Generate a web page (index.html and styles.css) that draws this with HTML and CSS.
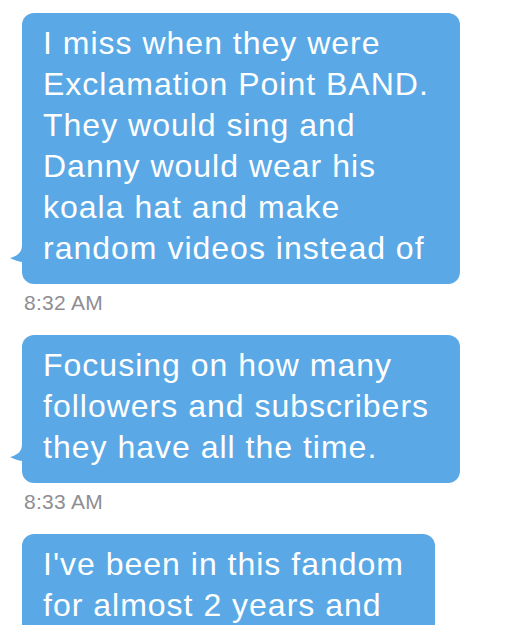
FILE: index.html
```html
<!DOCTYPE html>
<html lang="en">
<head>
    <meta charset="UTF-8">
    <meta name="viewport" content="width=device-width, initial-scale=1.0">
    <title>Messages</title>
    <link rel="stylesheet" href="styles.css">
</head>
<body>
    <div class="thread">
        <div class="message">
            <div class="bubble">
                I miss when they were<br>
                Exclamation Point BAND.<br>
                They would sing and<br>
                Danny would wear his<br>
                koala hat and make<br>
                random videos instead of
                <svg class="tail" viewBox="0 0 14 18" width="14" height="18"><path d="M12 0 C12 7 8 11 0 13 C4 15 9 17 14 17 L14 0 Z"/></svg>
            </div>
            <p class="time">8:32 AM</p>
        </div>

        <div class="message">
            <div class="bubble">
                Focusing on how many<br>
                followers and subscribers<br>
                they have all the time.
                <svg class="tail" viewBox="0 0 14 18" width="14" height="18"><path d="M12 0 C12 7 8 11 0 13 C4 15 9 17 14 17 L14 0 Z"/></svg>
            </div>
            <p class="time">8:33 AM</p>
        </div>

        <div class="message">
            <div class="bubble">
                I've been in this fandom<br>
                for almost 2 years and
            </div>
        </div>
    </div>
</body>
</html>
```
FILE: styles.css
```css
body {
    font-family: "Liberation Sans", Arial, sans-serif;
    background-color: #ffffff;
    margin: 0;
    padding: 13px 0 0 22px;
    overflow: hidden;
}

.thread {
    display: flex;
    flex-direction: column;
    align-items: flex-start;
    gap: 20px;
}

.message {
    display: flex;
    flex-direction: column;
    align-items: flex-start;
}

.bubble {
    position: relative;
    background-color: #5aa9e6;
    color: white;
    font-size: 32px;
    line-height: 41px;
    letter-spacing: 1px;
    padding: 10px 31px 15px 21px;
    border-radius: 12px;
    white-space: nowrap;
}

.tail {
    position: absolute;
    left: -12px;
    bottom: 21px;
    fill: #5aa9e6;
}

.time {
    margin: 6px 0 0 2px;
    font-size: 21px;
    line-height: 25px;
    letter-spacing: 0.3px;
    color: #8e8e93;
}
```
